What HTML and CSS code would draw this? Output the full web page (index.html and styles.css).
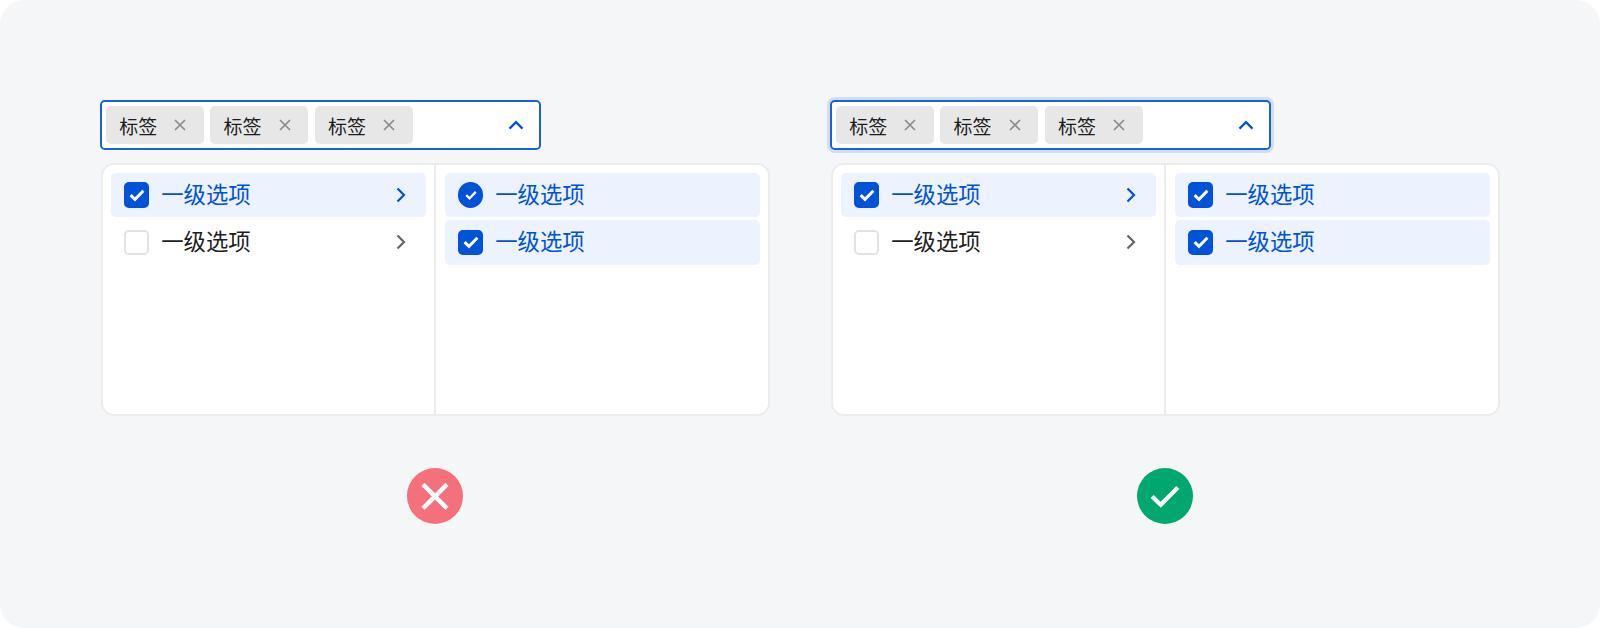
FILE: index.html
```html
<!DOCTYPE html>
<html lang="zh">
<head>
<meta charset="utf-8">
<title>级联选择</title>
<link rel="stylesheet" href="styles.css">
</head>
<body>
<svg class="defs" width="0" height="0" aria-hidden="true">
  <symbol id="i-check" viewBox="0 0 16 16"><path d="M1.6 8.2 6 12.4 14.4 3.8" fill="none" stroke="currentColor" stroke-width="3"/></symbol>
  <symbol id="i-close" viewBox="0 0 12 12"><path d="M1 1 11 11M11 1 1 11" fill="none" stroke="currentColor" stroke-width="1.7"/></symbol>
  <symbol id="i-up" viewBox="0 0 16 10"><path d="M1.5 8.6 8 2.1 14.5 8.6" fill="none" stroke="currentColor" stroke-width="2.2"/></symbol>
  <symbol id="i-right" viewBox="0 0 10 16"><path d="M1.5 1.5 8 8 1.5 14.5" fill="none" stroke="currentColor" stroke-width="2.2"/></symbol>
</svg>
<main class="stage">
  <section class="example">
    <div class="select">
      <span class="tag">标签<svg class="tag-x"><use href="#i-close"/></svg></span>
      <span class="tag">标签<svg class="tag-x"><use href="#i-close"/></svg></span>
      <span class="tag">标签<svg class="tag-x"><use href="#i-close"/></svg></span>
      <svg class="caret"><use href="#i-up"/></svg>
    </div>
    <div class="panel">
      <div class="col">
        <div class="opt on"><span class="box"><svg class="tick"><use href="#i-check"/></svg></span><span class="label">一级选项</span><svg class="arrow"><use href="#i-right"/></svg></div>
        <div class="opt"><span class="box"></span><span class="label">一级选项</span><svg class="arrow"><use href="#i-right"/></svg></div>
      </div>
      <div class="col">
        <div class="opt on"><span class="box round"><svg class="tick small"><use href="#i-check"/></svg></span><span class="label">一级选项</span></div>
        <div class="opt on"><span class="box"><svg class="tick"><use href="#i-check"/></svg></span><span class="label">一级选项</span></div>
      </div>
    </div>
    <div class="verdict bad"><svg viewBox="0 0 28 28"><path d="M8 8.2 20 20.2M20 8.2 8 20.2" fill="none" stroke="currentColor" stroke-width="2.2"/></svg></div>
  </section>
  <section class="example">
    <div class="select focus">
      <span class="tag">标签<svg class="tag-x"><use href="#i-close"/></svg></span>
      <span class="tag">标签<svg class="tag-x"><use href="#i-close"/></svg></span>
      <span class="tag">标签<svg class="tag-x"><use href="#i-close"/></svg></span>
      <svg class="caret"><use href="#i-up"/></svg>
    </div>
    <div class="panel">
      <div class="col">
        <div class="opt on"><span class="box"><svg class="tick"><use href="#i-check"/></svg></span><span class="label">一级选项</span><svg class="arrow"><use href="#i-right"/></svg></div>
        <div class="opt"><span class="box"></span><span class="label">一级选项</span><svg class="arrow"><use href="#i-right"/></svg></div>
      </div>
      <div class="col">
        <div class="opt on"><span class="box"><svg class="tick"><use href="#i-check"/></svg></span><span class="label">一级选项</span></div>
        <div class="opt on"><span class="box"><svg class="tick"><use href="#i-check"/></svg></span><span class="label">一级选项</span></div>
      </div>
    </div>
    <div class="verdict good"><svg viewBox="0 0 28 28"><path d="M7.6 14.2 11.9 18.4 20.4 9.8" fill="none" stroke="currentColor" stroke-width="2.1"/></svg></div>
  </section>
</main>
</body>
</html>
```
FILE: styles.css
```css
* { box-sizing: border-box; }
html, body { margin: 0; height: 100%; background: #fff; }
body { font-family: "Noto Sans CJK SC", "Noto Sans", sans-serif; }
.defs { position: absolute; }
.stage {
  width: 1600px;
  height: 628px;
  padding: 100px 0 0 100px;
  display: flex;
  gap: 60px;
  background: #f5f6f8;
  border-radius: 24px;
}
.example {
  width: 670px;
  display: flex;
  flex-direction: column;
}
.select {
  width: 441px;
  height: 50px;
  padding: 4px;
  display: flex;
  align-items: center;
  gap: 6.4px;
  background: #fff;
  border: 2px solid #1a62dd;
  border-radius: 4.8px;
}
.select.focus { box-shadow: 0 0 0 3px rgba(0, 82, 217, 0.15); }
.tag {
  width: 98px;
  height: 38px;
  padding-left: 13.2px;
  display: flex;
  align-items: center;
  font-size: 19px;
  color: rgba(0, 0, 0, 0.9);
  background: #e7e7e7;
  border-radius: 4.8px;
}
.tag-x {
  width: 12px;
  height: 12px;
  margin-left: 17.2px;
  color: #8b8b8b;
}
.caret {
  width: 16px;
  height: 10px;
  margin-left: auto;
  margin-right: 11px;
  color: #0052d9;
}
.panel {
  width: 669px;
  height: 253px;
  margin: 13px 0 0 1px;
  display: grid;
  grid-template-columns: 331px 1fr;
  background: #fff;
  border: 2px solid #ececec;
  border-radius: 12.8px;
}
.col {
  padding: 8px;
  display: flex;
  flex-direction: column;
  gap: 2.8px;
}
.col + .col { padding-left: 9px; border-left: 2px solid #ececec; }
.opt {
  height: 44.4px;
  padding: 0 12.8px;
  display: flex;
  align-items: center;
  gap: 12.8px;
  font-size: 22.4px;
  color: rgba(0, 0, 0, 0.9);
  border-radius: 4.8px;
}
.label { margin-left: -1px; padding-bottom: 4px; }
.opt.on { color: #0052d9; background: #ecf2fe; }
.box {
  width: 25.6px;
  height: 25.6px;
  flex: none;
  display: flex;
  align-items: center;
  justify-content: center;
  border: 2px solid #e2e2e2;
  border-radius: 4.8px;
}
.on .box { color: #fff; background: #0052d9; border-color: #0052d9; }
.box.round { border-radius: 50%; }
.tick { width: 16px; height: 16px; }
.tick.small { width: 12px; height: 12px; }
.arrow {
  width: 10px;
  height: 16px;
  margin-left: auto;
  margin-right: 7px;
  color: #666;
}
.on .arrow { color: #0052d9; }
.verdict {
  width: 56px;
  height: 56px;
  margin: 52px 0 0 307px;
  color: #fff;
  border-radius: 50%;
}
.verdict svg { display: block; width: 56px; height: 56px; }
.bad { background: #f4707b; }
.good { background: #00a870; }
```
